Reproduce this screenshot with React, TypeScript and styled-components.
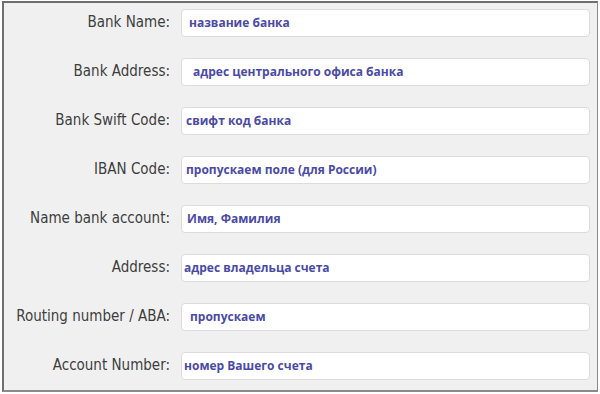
import styled, { createGlobalStyle } from 'styled-components';

const GlobalStyle = createGlobalStyle`
  html, body {
    margin: 0;
    padding: 0;
    background: #ffffff;
  }
`;

const Page = styled.div`
  width: 600px;
  height: 394px;
  box-sizing: border-box;
  padding: 1px 2px 2px 2px; /* thin white edge round the frame */
  background: #ffffff;
`;

const Frame = styled.div`
  height: 100%;
  box-sizing: border-box;
  border-top: 2px solid #6f6f6f;
  border-left: 2px solid #6f6f6f;
  border-right: 1px solid #8a8a8a;
  border-bottom: 2px solid #8a8a8a;
  background: #f0f0f0;
`;

const Form = styled.div`
  display: grid;
  grid-template-columns: 166px 1fr;
  column-gap: 11px;
  row-gap: 21px;
  padding: 6px 7px 0 0;
`;

const Label = styled.div`
  display: flex;
  align-items: center;
  justify-content: flex-end;
  height: 28px;
  padding-bottom: 3px;
  box-sizing: border-box;
  font-family: 'DejaVu Sans Condensed', 'DejaVu Sans', Tahoma, sans-serif;
  font-size: 15px;
  color: #3e3e3e;
  white-space: nowrap;
`;

const Field = styled.div<{ $indent: number }>`
  display: flex;
  align-items: center;
  height: 28px;
  box-sizing: border-box;
  padding-left: ${(p) => p.$indent}px;
  padding-bottom: 1px;
  background: #ffffff;
  border: 1px solid #dcdcdc;
  border-radius: 4px;
  font-family: 'Open Sans', 'Noto Sans', sans-serif;
  font-weight: 700;
  font-size: 12px;
  color: #4a4aa6;
  white-space: nowrap;
`;

const rows = [
  { label: 'Bank Name:', value: 'название банка', indent: 7 },
  { label: 'Bank Address:', value: 'адрес центрального офиса банка', indent: 11 },
  { label: 'Bank Swift Code:', value: 'свифт код банка', indent: 4 },
  { label: 'IBAN Code:', value: 'пропускаем поле (для России)', indent: 4 },
  { label: 'Name bank account:', value: 'Имя, Фамилия', indent: 5 },
  { label: 'Address:', value: 'адрес владельца счета', indent: 2 },
  { label: 'Routing number / ABA:', value: 'пропускаем', indent: 8 },
  { label: 'Account Number:', value: 'номер Вашего счета', indent: 2 },
];

const App = () => {
  return (
    <>
      <GlobalStyle />
      <Page>
        <Frame>
          <Form>
            {rows.map((r) => (
              <>
                <Label key={r.label + '-l'}>{r.label}</Label>
                <Field key={r.label + '-f'} $indent={r.indent}>
                  {r.value}
                </Field>
              </>
            ))}
          </Form>
        </Frame>
      </Page>
    </>
  );
};

export default App;
